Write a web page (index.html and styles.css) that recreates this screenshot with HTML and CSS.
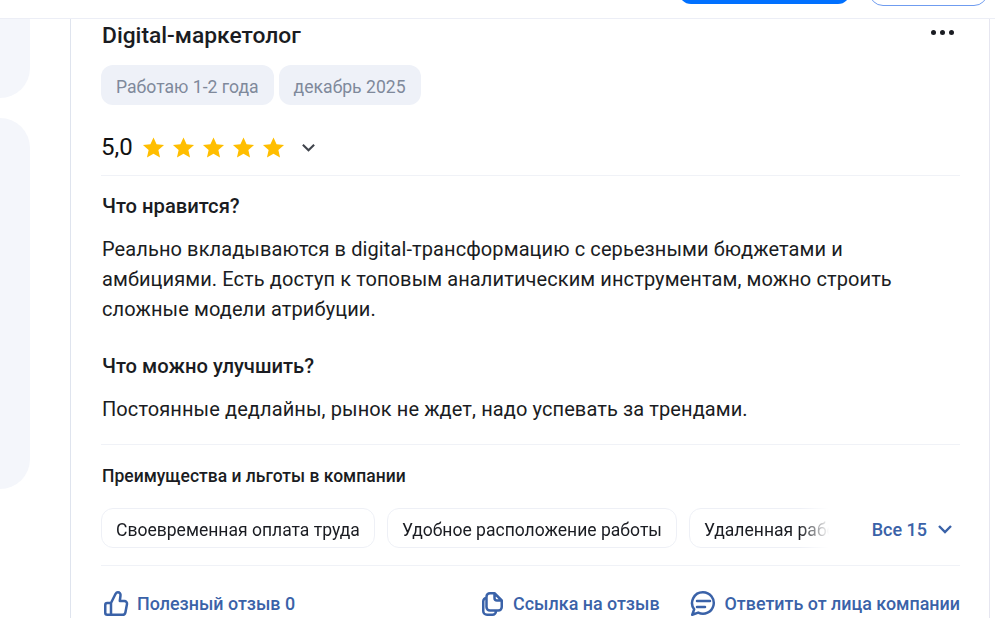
FILE: index.html
```html
<!DOCTYPE html>
<html lang="ru">
<head>
    <meta charset="UTF-8">
    <meta name="viewport" content="width=device-width, initial-scale=1.0">
    <title>Отзыв</title>
    <link rel="stylesheet" href="styles.css">
</head>
<body>
    <div class="topbar">
        <div class="btn-primary"></div>
        <div class="btn-outline"></div>
    </div>

    <div class="page">
        <div class="sidebar">
            <div class="side-card side-first"></div>
            <div class="side-card side-second"></div>
        </div>

        <div class="review">
            <div class="review-head">
                <h2>Digital-маркетолог</h2>
                <div class="dots"><span></span><span></span><span></span></div>
            </div>

            <div class="tags">
                <span class="tag">Работаю 1-2 года</span>
                <span class="tag">декабрь 2025</span>
            </div>

            <div class="rating">
                <span class="score">5,0</span>
                <div class="stars">
                    <svg viewBox="0 0 24 24"><path d="M12 1.5l3.2 7.2 7.8.8-5.9 5.2 1.7 7.7-6.8-4-6.8 4 1.7-7.7L1 9.500l7.800-.8z"/></svg>
                    <svg viewBox="0 0 24 24"><path d="M12 1.5l3.2 7.2 7.8.8-5.9 5.2 1.7 7.7-6.8-4-6.8 4 1.7-7.7L1 9.500l7.800-.8z"/></svg>
                    <svg viewBox="0 0 24 24"><path d="M12 1.5l3.2 7.2 7.8.8-5.9 5.2 1.7 7.7-6.8-4-6.8 4 1.7-7.7L1 9.500l7.800-.8z"/></svg>
                    <svg viewBox="0 0 24 24"><path d="M12 1.5l3.2 7.2 7.8.8-5.9 5.2 1.7 7.7-6.8-4-6.8 4 1.7-7.7L1 9.500l7.800-.8z"/></svg>
                    <svg viewBox="0 0 24 24"><path d="M12 1.5l3.2 7.2 7.8.8-5.9 5.2 1.7 7.7-6.8-4-6.8 4 1.7-7.7L1 9.500l7.800-.8z"/></svg>
                </div>
                <svg class="rating-arrow" viewBox="0 0 16 16"><path d="M2 5l6 6 6-6"/></svg>
            </div>

            <div class="section">
                <h3>Что нравится?</h3>
                <p>Реально вкладываются в digital-трансформацию с серьезными бюджетами и амбициями. Есть доступ к топовым аналитическим инструментам, можно строить сложные модели атрибуции.</p>
                <h3 class="second">Что можно улучшить?</h3>
                <p>Постоянные дедлайны, рынок не ждет, надо успевать за трендами.</p>
            </div>

            <div class="benefits">
                <h4>Преимущества и льготы в компании</h4>
                <div class="benefits-row">
                    <div class="chips">
                        <span class="chip">Своевременная оплата труда</span>
                        <span class="chip">Удобное расположение работы</span>
                        <span class="chip">Удаленная работа</span>
                    </div>
                    <a class="all-link" href="#">Все 15
                        <svg viewBox="0 0 16 16"><path d="M2 5l6 6 6-6"/></svg>
                    </a>
                </div>
            </div>

            <div class="actions">
                <a class="action" href="#">
                    <svg viewBox="0 0 28 28"><path d="M10 24.750V13l4.600-9.200c.5-.9 1.400-1.500 2.300-1.500 1.700 0 2.900 1.500 2.600 3.200L18.800 11h4.600c1.700 0 2.900 1.500 2.600 3.100l-1.600 8.300c-.3 1.400-1.500 2.350-2.900 2.350H6.200c-1.100 0-1.950-.85-1.950-1.950V14.900c0-1.100.85-1.900 1.950-1.900H10"/></svg>
                    Полезный отзыв 0
                </a>
                <div class="actions-right">
                    <a class="action" href="#">
                        <svg viewBox="0 0 28 28"><path d="M13 3.250h4.500l7.250 7.250V17c0 2-1.500 3.500-3.500 3.500H13c-2 0-3.500-1.500-3.500-3.500V6.750c0-2 1.500-3.500 3.500-3.500zM17.500 3.250V8c0 1.400 1.100 2.500 2.500 2.500h4.750M9.500 8C7.700 8 6.250 9.500 6.250 11.250V21c0 2 1.700 3.750 3.750 3.750h5.500c2 0 3.500-1.700 3.500-3.750v-.5"/></svg>
                        Ссылка на отзыв
                    </a>
                    <a class="action" href="#">
                        <svg viewBox="0 0 28 28"><path d="M14 2.250a10.750 10.750 0 1 1-4.800 20.370L3.250 24.750l1.900-5.400A10.750 10.750 0 0 1 14 2.250zM8 11h13M8 17h8"/></svg>
                        Ответить от лица компании
                    </a>
                </div>
            </div>
        </div>
    </div>
</body>
</html>
```

FILE: styles.css
```css
html, body {
    height: 100%;
}
body {
    font-family: 'Roboto', 'Liberation Sans', sans-serif;
    background-color: #ffffff;
    color: #1a1c22;
    margin: 0;
    padding: 0;
    overflow: hidden;
}
a {
    text-decoration: none;
}
.topbar {
    height: 18px;
    border-bottom: 1px solid #eceef6;
    display: flex;
    justify-content: flex-end;
    gap: 19px;
    padding-right: 7px;
    overflow: hidden;
}
.btn-primary {
    width: 171px;
    height: 30px;
    margin-top: -26px;
    background-color: #0070ff;
    border-radius: 12px;
}
.btn-outline {
    width: 117px;
    height: 30px;
    margin-top: -26px;
    border: 1px solid #6f9cf0;
    border-radius: 14px;
}
.page {
    display: flex;
    gap: 40px;
}
.sidebar {
    flex: none;
    width: 30px;
    display: flex;
    flex-direction: column;
    gap: 20px;
}
.side-card {
    background-color: #f4f6fb;
    border-radius: 0 30px 30px 0;
}
.side-first {
    height: 79px;
    border-radius: 0 0 30px 0;
}
.side-second {
    height: 371px;
}
.review {
    flex: none;
    box-sizing: border-box;
    width: 920px;
    height: 599px;
    padding: 0 29px 0 30px;
    border-left: 1px solid #dfe4ee;
    border-right: 1px solid #e6e6f0;
    overflow: hidden;
}
.review-head {
    display: flex;
    justify-content: space-between;
    align-items: flex-start;
    height: 46px;
    padding-left: 1px;
}
h2 {
    margin: 0;
    font-size: 22.8px;
    line-height: 34px;
    font-weight: 500;
}
.dots {
    display: flex;
    gap: 4px;
    margin-top: 11px;
    margin-right: 6px;
}
.dots span {
    width: 5px;
    height: 5px;
    border-radius: 50%;
    background-color: #1a1c22;
}
.tags {
    display: flex;
    gap: 5px;
}
.tag {
    background-color: #eef1f8;
    color: #7f899b;
    font-size: 17.6px;
    line-height: 36px;
    padding: 4px 15px 0;
    border-radius: 12px;
}
.rating {
    display: flex;
    align-items: center;
    height: 56px;
    padding-top: 14px;
    border-bottom: 1px solid #f0f2f7;
}
.score {
    font-size: 24px;
    color: #111111;
    width: 41px;
}
.stars {
    display: flex;
    gap: 7px;
}
.stars svg {
    width: 23px;
    height: 23px;
    fill: #ffbe00;
}
.rating-arrow {
    width: 15px;
    height: 15px;
    margin-left: 16px;
    fill: none;
    stroke: #40444c;
    stroke-width: 2.2;
}
.section {
    padding-top: 15px;
    padding-bottom: 20px;
    padding-left: 1px;
    border-bottom: 1px solid #f0f2f7;
}
h3 {
    margin: 0;
    font-size: 20.2px;
    line-height: 30px;
    font-weight: 500;
}
h3.second {
    margin-top: 27px;
}
.section p {
    margin: 13px 0 0;
    font-size: 20px;
    line-height: 30px;
    letter-spacing: 0.1px;
}
.benefits {
    padding-top: 20px;
    padding-bottom: 17px;
    border-bottom: 1px solid #f0f2f7;
}
h4 {
    margin: 0 0 0 1px;
    font-size: 17.5px;
    line-height: 22px;
    font-weight: 500;
}
.benefits-row {
    display: flex;
    align-items: center;
    justify-content: space-between;
    margin-top: 21px;
}
.chips {
    display: flex;
    gap: 12px;
    width: 728px;
    overflow: hidden;
    -webkit-mask-image: linear-gradient(to right, #000 96%, transparent 100%);
    mask-image: linear-gradient(to right, #000 96%, transparent 100%);
}
.chip {
    flex: none;
    font-size: 17.55px;
    line-height: 34px;
    padding: 4px 14px 0;
    background-color: #ffffff;
    border: 1px solid #eef0f6;
    border-radius: 12px;
}
.all-link {
    display: flex;
    align-items: center;
    gap: 10px;
    font-size: 18px;
    font-weight: 500;
    color: #3a62a8;
    padding-top: 2px;
    padding-right: 7px;
}
.all-link svg {
    width: 16px;
    height: 16px;
    fill: none;
    stroke: #3a62a8;
    stroke-width: 2.4;
}
.actions {
    display: flex;
    justify-content: space-between;
    padding-top: 24px;
}
.actions-right {
    display: flex;
    gap: 29px;
}
.action {
    display: flex;
    align-items: center;
    gap: 8px;
    font-size: 17.9px;
    line-height: 28px;
    font-weight: 500;
    color: #3a62a8;
}
.action svg {
    width: 28px;
    height: 28px;
    fill: none;
    stroke: #3a62a8;
    stroke-width: 2.5;
    stroke-linejoin: round;
    stroke-linecap: round;
}
```
